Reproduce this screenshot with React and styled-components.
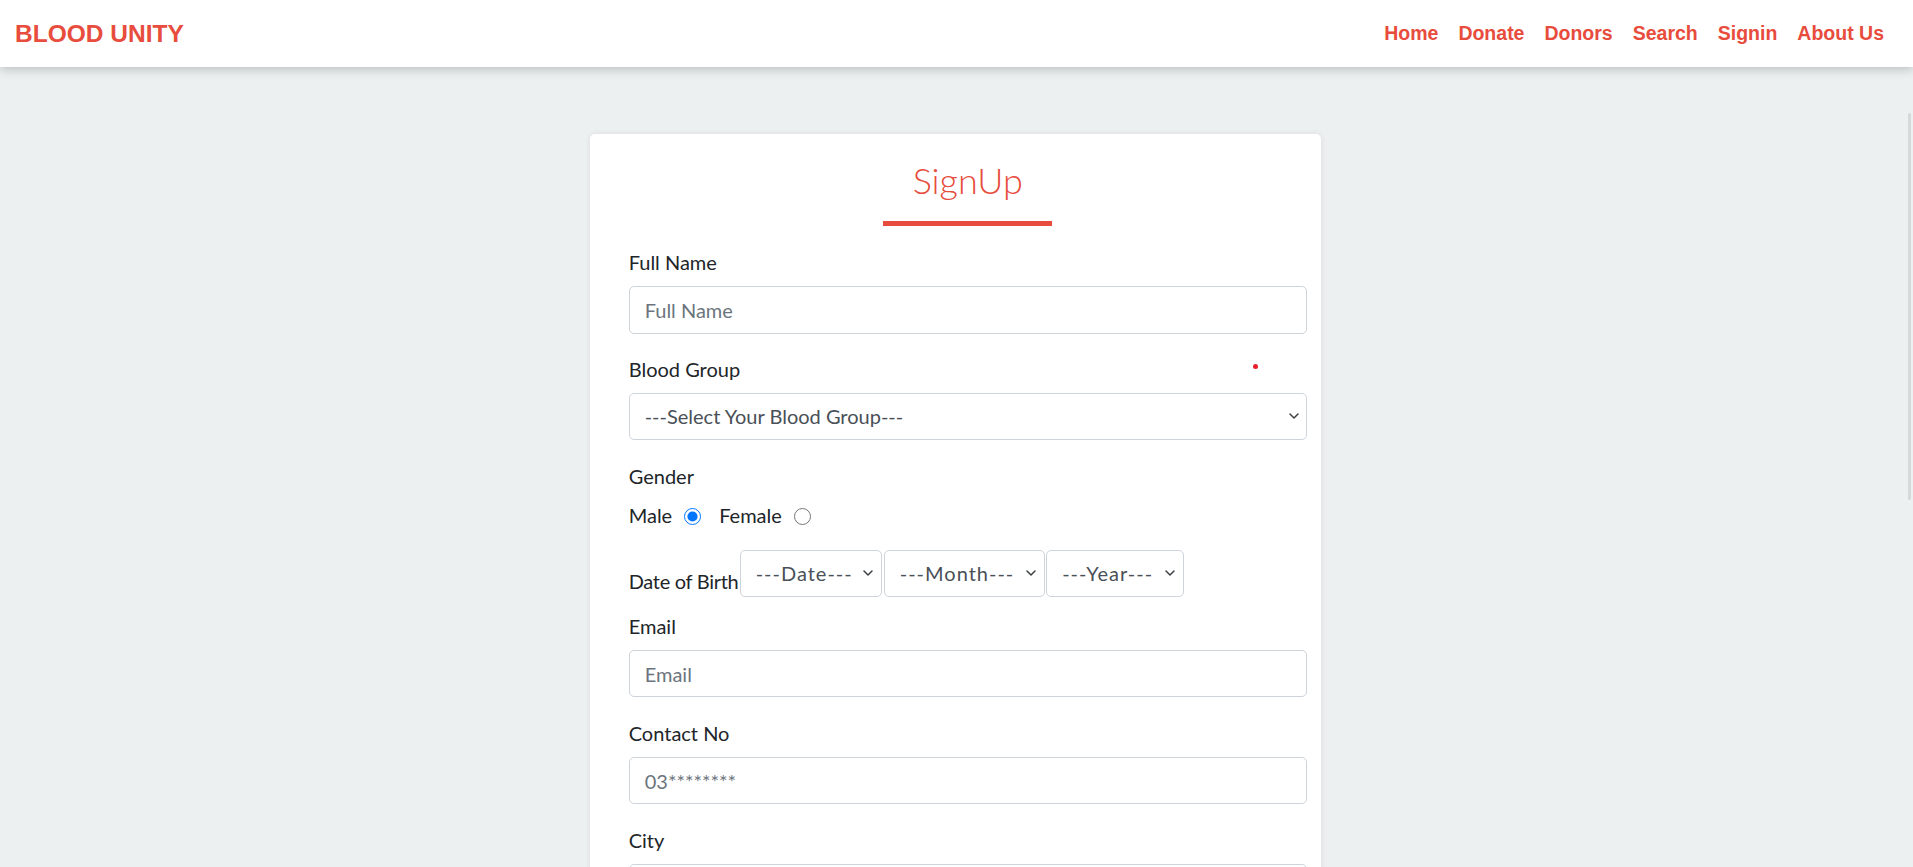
import React from 'react';
import styled, { createGlobalStyle } from 'styled-components';

const Global = createGlobalStyle`
  * { box-sizing: border-box; }
  html, body { margin: 0; padding: 0; overflow: hidden; }
  body {
    background: #ecf0f1;
    font-family: Lato, "Noto Sans", sans-serif;
    color: #212529;
  }
`;

const Nav = styled.header`
  position: relative;
  z-index: 2;
  height: 67px;
  background: #fff;
  display: flex;
  align-items: center;
  justify-content: space-between;
  padding: 0 19px 0 15px;
  box-shadow: 0 2px 10px rgba(0, 0, 0, 0.22);
`;

const Brand = styled.a`
  font-family: "Liberation Sans", Arial, sans-serif;
  font-weight: 700;
  font-size: 24.5px;
  color: #e74c3c;
  text-decoration: none;
`;

const Links = styled.nav`
  display: flex;
  align-items: center;
`;

const NavLink = styled.a`
  font-family: "Liberation Sans", Arial, sans-serif;
  font-weight: 700;
  font-size: 19.5px;
  color: #e74c3c;
  text-decoration: none;
  padding: 0 10px;
`;

const Main = styled.main`
  display: flex;
  justify-content: center;
  padding: 67px 2px 40px 0;
`;

const Card = styled.section`
  width: 731px;
  background: #fff;
  border-radius: 5px;
  box-shadow: 0 0 6px rgba(0, 0, 0, 0.08);
  padding: 24.5px 14.3px 30px 38.7px;
`;

const Title = styled.h2`
  margin: 0;
  text-align: center;
  font-size: 36px;
  line-height: 43px;
  font-weight: 300;
  color: #e74c3c;
`;

const TitleBar = styled.div`
  width: 169px;
  height: 5px;
  margin: 19.5px auto 21px;
  background: #e74c3c;
`;

const Group = styled.div`
  margin-bottom: ${(p) => p.$mb ?? 20.5}px;
`;

const Label = styled.label`
  display: block;
  font-size: 20px;
  line-height: 30px;
  margin-bottom: 9px;
`;

const LabelRow = styled.div`
  display: flex;
  margin-bottom: 8.5px;
`;

const RowLabel = styled.label`
  font-size: 20px;
  line-height: 30px;
`;

const Dot = styled.span`
  width: 5px;
  height: 5px;
  border-radius: 50%;
  background: #e8202a;
  margin: 9.5px 49px 0 auto;
`;

const Field = styled.input`
  display: block;
  width: 100%;
  height: 47.5px;
  padding: 7.5px 15px;
  font-family: inherit;
  font-size: 20px;
  color: #495057;
  background: #fff;
  border: 1px solid #ced4da;
  border-radius: 5px;
  outline: none;
  &::placeholder { color: #6c757d; }
`;

const SelectWrap = styled.div`
  position: relative;
  width: ${(p) => (p.$w ? `${p.$w}px` : '100%')};
  flex: ${(p) => (p.$w ? '0 0 auto' : '1 1 auto')};
`;

const SelectField = styled.select`
  display: block;
  width: 100%;
  height: ${(p) => (p.$small ? 47 : 47.5)}px;
  padding: 0 26px 0 15px;
  appearance: none;
  -webkit-appearance: none;
  font-family: inherit;
  font-size: 20px;
  letter-spacing: ${(p) => (p.$small ? '1px' : '0')};
  color: #495057;
  background: #fff;
  border: 1px solid #ced4da;
  border-radius: 5px;
  outline: none;
`;

const Chevron = styled.svg`
  position: absolute;
  right: ${(p) => (p.$small ? 9 : 8)}px;
  top: 50%;
  transform: translateY(-50%);
  pointer-events: none;
`;

const RadioRow = styled.div`
  display: flex;
  align-items: center;
  height: 30px;
  font-size: 20px;
  margin-bottom: 19.7px;
`;

const RadioText = styled.span`
  margin-left: ${(p) => p.$ml ?? 0}px;
`;

const Radio = styled.input`
  width: 16.7px;
  height: 16.7px;
  margin: 3px 0 0 12px;
`;

const DobRow = styled.div`
  display: flex;
  align-items: flex-end;
  gap: 1.4px;
  margin-bottom: 13.8px;
`;

const DobLabel = styled.label`
  width: 109.6px;
  min-width: 0;
  flex: 0 0 109.6px;
  font-size: 20px;
  line-height: 30px;
  letter-spacing: -0.3px;
  margin-bottom: 1px;
  white-space: nowrap;
`;

const ScrollThumb = styled.div`
  position: fixed;
  right: 2px;
  top: 113px;
  width: 3px;
  height: 387px;
  border-radius: 2px;
  background: #d5d9da;
`;

function Select({ width, small, children }) {
  return (
    <SelectWrap $w={width}>
      <SelectField $small={small} defaultValue="">
        {children}
      </SelectField>
      <Chevron $small={small} width="10" height="6" viewBox="0 0 10 6">
        <path d="M1 1l4 4 4-4" stroke="#3c4043" strokeWidth="1.5" fill="none" strokeLinecap="round" strokeLinejoin="round" />
      </Chevron>
    </SelectWrap>
  );
}

export default function App() {
  return (
    <>
      <Global />
      <Nav>
        <Brand href="#">BLOOD UNITY</Brand>
        <Links>
          {['Home', 'Donate', 'Donors', 'Search', 'Signin', 'About Us'].map((l) => (
            <NavLink key={l} href="#">{l}</NavLink>
          ))}
        </Links>
      </Nav>
      <Main>
        <Card>
          <Title>SignUp</Title>
          <TitleBar />
          <form onSubmit={(e) => e.preventDefault()}>
            <Group>
              <Label>Full Name</Label>
              <Field type="text" placeholder="Full Name" />
            </Group>
            <Group $mb={21.3}>
              <LabelRow>
                <RowLabel>Blood Group</RowLabel>
                <Dot />
              </LabelRow>
              <Select>
                <option value="">---Select Your Blood Group---</option>
                <option>A+</option>
                <option>A-</option>
                <option>B+</option>
                <option>B-</option>
                <option>O+</option>
                <option>O-</option>
                <option>AB+</option>
                <option>AB-</option>
              </Select>
            </Group>
            <Group $mb={0}>
              <Label>Gender</Label>
              <RadioRow>
                <RadioText>Male</RadioText>
                <Radio type="radio" name="gender" defaultChecked />
                <RadioText $ml={18.3}>Female</RadioText>
                <Radio type="radio" name="gender" />
              </RadioRow>
            </Group>
            <DobRow>
              <DobLabel>Date of Birth</DobLabel>
              <Select width={142.7} small>
                <option value="">---Date---</option>
              </Select>
              <Select width={161} small>
                <option value="">---Month---</option>
              </Select>
              <Select width={138} small>
                <option value="">---Year---</option>
              </Select>
            </DobRow>
            <Group>
              <Label>Email</Label>
              <Field type="email" placeholder="Email" />
            </Group>
            <Group>
              <Label>Contact No</Label>
              <Field type="text" placeholder="03********" />
            </Group>
            <Group>
              <Label>City</Label>
              <Field type="text" placeholder="City" />
            </Group>
          </form>
        </Card>
      </Main>
      <ScrollThumb />
    </>
  );
}
